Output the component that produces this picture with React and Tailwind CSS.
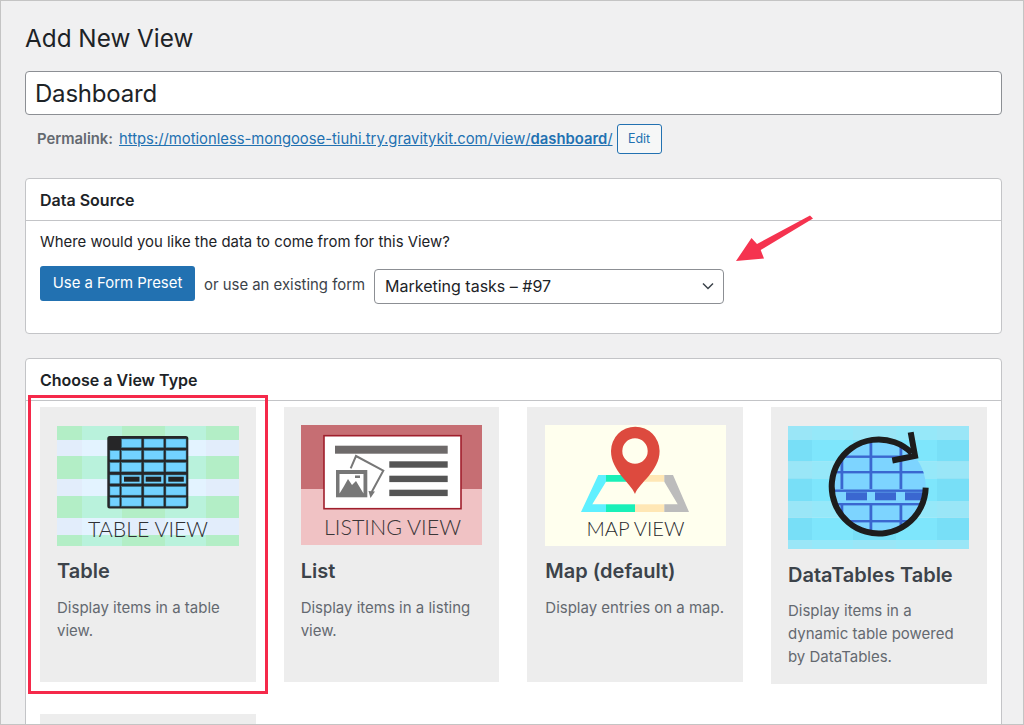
import React from "react";

const FONT = "font-['Inter','Liberation_Sans',sans-serif]";

function TableImg() {
  const rows = [[0,14,1],[14,16,0],[30,23,1],[53,17,0],[70,22,1],[92,17,0],[109,11,1]];
  const cols = [[0,25,1],[25,40,0],[65,43,1],[108,41,0],[149,33,1]];
  const cx = [[53,9.5],[64.7,19.5],[87,19.5],[109,20]];
  const cy = [[13,8.5],[24.7,8.8],[36.7,9],[49,8.4],[60.7,8.4],[71.7,8.4]];
  return (
    <svg viewBox="0 0 182 120" className="block w-[182px] h-[120px]">
      {rows.map(([y,h,g],i)=>cols.map(([x,w,d],j)=>(
        <rect key={i+"-"+j} x={x} y={y} width={w} height={h} fill={g ? (d ? "#b3eec6" : "#b9f2dc") : (d ? "#e2edfb" : "#e3f3ff")} />
      )))}
      <rect x="50.3" y="10" width="81" height="72.5" rx="2.5" fill="#262628" />
      {cy.map(([y,h],i)=>cx.map(([x,w],j)=> (i===0&&j===0) ? null : (
        <rect key={i+"c"+j} x={x} y={y} width={w} height={h} fill="#72d2ff" stroke="#3f8ca6" strokeWidth="0.5" />
      )))}
      {[67,88.7,111.3].map((x,i)=>(
        <rect key={i} x={x} y="50.7" width="15.5" height="5" fill="#222" />
      ))}
      <text x="91" y="110.5" textAnchor="middle" fontFamily="Lato, sans-serif" fontWeight="300" fontSize="21" fill="#2f3033" textLength="120" lengthAdjust="spacingAndGlyphs">TABLE VIEW</text>
    </svg>
  );
}

function ListImg() {
  return (
    <svg viewBox="0 0 181 120" className="block w-[181px] h-[120px]">
      <rect width="181" height="64" fill="#c66e73" />
      <rect y="64" width="181" height="56" fill="#f0c2c4" />
      <rect x="23" y="10.7" width="137" height="73" fill="#fff" stroke="#a01f2c" strokeWidth="1.6" />
      <rect x="34" y="20.7" width="112.7" height="8" fill="#6e6a6a" />
      <rect x="88.3" y="36.3" width="58.4" height="6.4" fill="#555" />
      <rect x="88.3" y="50.7" width="58.4" height="6.4" fill="#555" />
      <rect x="88.3" y="64.7" width="58.4" height="6.4" fill="#555" />
      <path d="M49.7 43.3 L55 31 L82.3 45.7 L70.7 67" fill="none" stroke="#777" strokeWidth="2" />
      <path d="M67.5 66 L69.5 73 L74 66.5 Z" fill="#777" />
      <rect x="35" y="45" width="31.3" height="27.3" fill="#777" />
      <path d="M38.5 68.5 V49 H62.5 V68.5 L58 61 L55 56 L51 60 L47 54 L42.5 62 Z" fill="#fff" />
      <rect x="54" y="50.5" width="5" height="2.5" fill="#777" />
      <text x="91.5" y="110" textAnchor="middle" fontFamily="Lato, sans-serif" fontWeight="300" fontSize="21" fill="#3a3638" textLength="137" lengthAdjust="spacingAndGlyphs">LISTING VIEW</text>
    </svg>
  );
}

function MapImg() {
  return (
    <svg viewBox="0 0 181 121" className="block w-[181px] h-[121px]">
      <rect width="181" height="121" fill="#ffffee" />
      <polygon points="36,87 53.3,50 61,50 61,56.7 47.3,79.3 61,79.3 61,87" fill="#5ff0ff" />
      <polygon points="61,50 78,50 86,56.7 61,56.7" fill="#19f0b8" />
      <rect x="61" y="79.3" width="29" height="7.7" fill="#19f0b8" />
      <rect x="90" y="79.3" width="29.3" height="7.7" fill="#ffe7b5" />
      <polygon points="102,50 119.3,50 119.3,56.7 96,56.7" fill="#ffe7b5" />
      <polygon points="119.3,50 128,50 144,87 119.3,87 119.3,79.3 132.7,79.3 119.3,56.7" fill="#bcbcbc" />
      <path fillRule="evenodd" d="M90 69 C86 58 66 46 66 26 A24.3 24.3 0 0 1 114.6 26 C114.6 46 94 58 90 69 Z M90 13.3 A12.7 12.7 0 1 0 90 38.7 A12.7 12.7 0 1 0 90 13.3 Z" fill="#dd4a3e" />
      <text x="90.5" y="111" textAnchor="middle" fontFamily="Lato, sans-serif" fontWeight="300" fontSize="20.5" fill="#2b2b2e" textLength="98" lengthAdjust="spacingAndGlyphs">MAP VIEW</text>
    </svg>
  );
}

function DataTablesImg() {
  const rows = [[0,14,1],[14,21.7,0],[35.7,16.6,1],[52.3,22.7,0],[75,16.7,1],[91.7,22.3,0],[114,9,1]];
  const cols = [[0,24,0],[24,41,1],[65,43,0],[108,41,1],[149,32,0]];
  return (
    <svg viewBox="0 0 181 123" className="block w-[181px] h-[123px]">
      <defs>
        <clipPath id="dtc"><circle cx="90.7" cy="60.7" r="47" /></clipPath>
      </defs>
      {rows.map(([y,h,l],i)=>cols.map(([x,w,d],j)=>(
        <rect key={i+"-"+j} x={x} y={y} width={w} height={h} fill={l ? (d ? "#96e8f9" : "#9ae6f7") : (d ? "#7ee6fc" : "#78dff7")} />
      )))}
      <g clipPath="url(#dtc)">
        <rect width="181" height="123" fill="#7dd4ff" />
        {[29.5,45,63.5,77,94].map((y)=>(<rect key={y} x="30" y={y} width="120" height="2.4" fill="#3a67d0" />))}
        {[52.5,81.5,111.5].map((x)=>(<rect key={x} x={x} y="0" width="2.8" height="63" fill="#3a67d0" />))}
        {[52.5,81.5,111.5].map((x)=>(<rect key={x} x={x} y="78" width="2.8" height="45" fill="#3a67d0" />))}
        {[58,87,117].map((x)=>(<rect key={x} x={x} y="66.3" width="21" height="8" fill="#3a67d0" />))}
      </g>
      <path d="M137.7 61.7 A47 47 0 1 1 123.7 27" fill="none" stroke="#1d1d1d" strokeWidth="6" />
      <path d="M122.7 6.3 L127 30 L104.3 34.5" fill="none" stroke="#1d1d1d" strokeWidth="6" />
    </svg>
  );
}

function ViewCard({ image, imageBox, title, lines, tall, inset }) {
  return (
    <div className={"bg-[#ededed] pr-[17px] pt-[18px] " + (inset ? "pl-[18px] " : "pl-[17px] ") + (tall ? "h-[277px]" : "h-[275px]")}>
      <div className={imageBox}>{image}</div>
      <h3 className="mt-[12px] text-[20px] leading-[26px] font-semibold text-[#3c434a]">{title}</h3>
      <p className={(tall ? "mt-[11px]" : "mt-[12px]") + " text-[15px] leading-[23px] text-[#646970]"}>
        {lines.map((l) => (<span key={l} className="block whitespace-nowrap">{l}</span>))}
      </p>
    </div>
  );
}

export default function App() {
  return (
    <div className={FONT + " relative w-[1024px] h-[725px] overflow-hidden bg-[#f0f0f1] border border-[#c4c4c4] pl-[24px] pr-[21px] pt-[22px] text-[#1d2327]"}>
      <h1 className="text-[24.3px] leading-[30px] font-normal">Add New View</h1>

      <div className="mt-[18px] h-[44px] bg-white border border-[#8c8f94] rounded-[4px] flex items-center px-[9px] pt-[2px] text-[24px] tracking-[-0.2px]">Dashboard</div>

      <div className="mt-[9px] flex items-center h-[30px] pl-[12px] text-[14.8px]">
        <span className="font-semibold text-[#646970] mr-[6px] mt-[1px]">Permalink:</span>
        <a className="text-[#2271b1] underline whitespace-nowrap mt-[1px]">https://motionless-mongoose-tiuhi.try.gravitykit.com/view/<b className="font-semibold">dashboard</b>/</a>
        <span className="ml-[4px] w-[45px] h-[30px] flex items-center justify-center border border-[#2271b1] rounded-[3px] text-[12.5px] text-[#2271b1] bg-[#f6f7f7]">Edit</span>
      </div>

      <section className="mt-[24px] h-[156px] bg-white border border-[#c3c4c7] rounded-[4px]">
        <div className="h-[42px] border-b border-[#c3c4c7] flex items-center pl-[14px] text-[16px] font-semibold">Data Source</div>
        <div className="pl-[14px] pt-[13px]">
          <p className="text-[14.9px] leading-[17px]">Where would you like the data to come from for this View?</p>
          <div className="mt-[13px] flex items-center text-[14.9px]">
            <span className="-mt-[1px] w-[155px] h-[35px] flex items-center justify-center bg-[#2271b1] rounded-[3px] text-white">Use a Form Preset</span>
            <span className="ml-[9px] w-[170px] whitespace-nowrap text-[#3c434a] mt-[2px]">or use an existing form</span>
            <div className="mt-[5px] w-[350px] h-[35px] border border-[#8c8f94] rounded-[4px] flex items-center justify-between pl-[10px] pr-[9px] pb-[1px] text-[16px]">
              Marketing tasks – #97
              <svg viewBox="0 0 12 8" className="w-[12px] h-[8px]"><path d="M1 1.5 L6 6.5 L11 1.5" fill="none" stroke="#3c434a" strokeWidth="1.5" /></svg>
            </div>
          </div>
        </div>
      </section>

      <section className="mt-[24px] h-[400px] bg-white border border-[#c3c4c7] rounded-t-[4px]">
        <div className="h-[42px] border-b border-[#c3c4c7] flex items-center pl-[14px] text-[16px] font-semibold">Choose a View Type</div>
        <div className="pl-[14px] pt-[6px] grid grid-cols-[215.67px_215.67px_215.67px_215.67px] gap-x-[28px] gap-y-[30px] items-start">
          <ViewCard imageBox="h-[121px] pt-px" image={<TableImg />} title="Table" lines={["Display items in a table", "view."]} />
          <ViewCard imageBox="h-[121px]" image={<ListImg />} title="List" lines={["Display items in a listing", "view."]} />
          <ViewCard inset imageBox="h-[121px]" image={<MapImg />} title="Map (default)" lines={["Display entries on a map."]} />
          <ViewCard tall imageBox="h-[125px] pt-px" image={<DataTablesImg />} title="DataTables Table" lines={["Display items in a", "dynamic table powered", "by DataTables."]} />
          <div className="h-[275px] bg-[#ededed]" />
        </div>
      </section>

      <div className="absolute left-[27px] top-[394px] w-[240px] h-[299px] border-[3px] border-[#f5294a]" />
      <svg viewBox="0 0 1024 725" className="absolute left-[-1px] top-[-1px] w-[1024px] h-[725px] pointer-events-none">
        <polygon points="810,215.5 813,218.5 760.7,250 764,258.5 736,261 751.5,238 757,244" fill="#f5334f" />
      </svg>
    </div>
  );
}
